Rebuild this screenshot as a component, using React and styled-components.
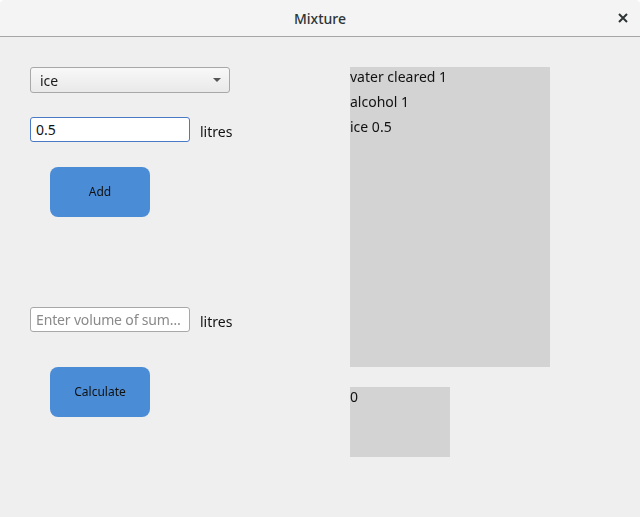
import * as React from "react";
import styled, { createGlobalStyle } from "styled-components";

const GlobalStyle = createGlobalStyle`
  html, body {
    margin: 0;
    padding: 0;
    background: #ffffff;
    font-family: "Noto Sans", "Open Sans", sans-serif;
  }
`;

const Window = styled.div`
  width: 640px;
  height: 517px;
  display: flex;
  flex-direction: column;
  background: #efefef;
  border-radius: 5px 5px 0 0;
  overflow: hidden;
`;

const TitleBar = styled.div`
  height: 36px;
  flex: none;
  display: flex;
  align-items: center;
  justify-content: center;
  position: relative;
  background: #f4f4f4;
  border-bottom: 1px solid #a6a6a6;
  color: #2e3436;
  font-size: 14px;
  font-weight: 500;
`;

const CloseButton = styled.button`
  position: absolute;
  right: 12px;
  top: 13px;
  width: 10px;
  height: 10px;
  padding: 0;
  border: none;
  background: none;
  display: flex;
`;

const Body = styled.div`
  flex: 1;
  display: flex;
  padding: 30px 0 0 30px;
`;

const LeftColumn = styled.div`
  width: 320px;
  display: flex;
  flex-direction: column;
`;

const RightColumn = styled.div`
  display: flex;
  flex-direction: column;
  gap: 20px;
`;

const SelectWrap = styled.div`
  position: relative;
  width: 200px;
  height: 26px;
`;

const Select = styled.select`
  appearance: none;
  width: 100%;
  height: 100%;
  box-sizing: border-box;
  padding: 0 24px 0 9px;
  border: 1px solid #a8a8a8;
  border-radius: 3px;
  background: linear-gradient(#f8f8f8, #e9e9e9);
  font-family: "Noto Sans", sans-serif;
  font-size: 14px;
  color: #1a1a1a;
  outline: none;
`;

const Arrow = styled.span`
  position: absolute;
  right: 9px;
  top: 11px;
  width: 0;
  height: 0;
  border-left: 4px solid transparent;
  border-right: 4px solid transparent;
  border-top: 4px solid #555;
  pointer-events: none;
`;

const FieldRow = styled.div`
  display: flex;
  align-items: center;
  gap: 10px;
  margin-top: ${(p) => p.$top}px;
`;

const Input = styled.input`
  width: 160px;
  height: 25px;
  box-sizing: border-box;
  padding: 0 4px 0 5px;
  border: 1px solid ${(p) => (p.$focused ? "#4a79c6" : "#a8a8a8")};
  border-radius: 3px;
  background: #ffffff;
  font-family: "Noto Sans", sans-serif;
  font-size: 14px;
  color: #111;
  caret-color: #000;
  outline: none;
  text-overflow: ellipsis;
  &::placeholder {
    color: #8a8a8a;
    letter-spacing: -0.15px;
  }
`;

const Unit = styled.span`
  font-size: 14px;
  color: #111;
  padding-top: 3px;
`;

const ActionButton = styled.button`
  width: 100px;
  height: 50px;
  margin: ${(p) => p.$top}px 0 0 20px;
  border: none;
  border-radius: 8px;
  background: #4a8cd6;
  color: #111;
  font-family: "Noto Sans", sans-serif;
  font-size: 12px;
  padding-bottom: 2px;
`;

const ListBox = styled.div`
  width: 200px;
  height: 300px;
  background: #d3d3d3;
  display: flex;
  flex-direction: column;
  gap: 5px;
`;

const ResultBox = styled.div`
  width: 100px;
  height: 70px;
  background: #d3d3d3;
`;

const Line = styled.div`
  font-size: 14px;
  line-height: 20px;
  color: #111;
`;

const items = ["vater cleared 1", "alcohol 1", "ice 0.5"];

export default function App() {
  const [amount, setAmount] = React.useState("0.5");
  const [volume, setVolume] = React.useState("");
  const ref = React.useRef(null);

  React.useEffect(() => {
    const el = ref.current;
    if (el) {
      el.focus();
      el.setSelectionRange(el.value.length, el.value.length);
    }
  }, []);

  return (
    <>
      <GlobalStyle />
      <Window>
        <TitleBar>
          Mixture
          <CloseButton aria-label="close">
            <svg width="10" height="10" viewBox="0 0 10 10">
              <path d="M1 1L9 9M9 1L1 9" stroke="#2e3436" strokeWidth="2" />
            </svg>
          </CloseButton>
        </TitleBar>
        <Body>
          <LeftColumn>
            <SelectWrap>
              <Select defaultValue="ice">
                <option>water cleared</option>
                <option>alcohol</option>
                <option>ice</option>
              </Select>
              <Arrow />
            </SelectWrap>
            <FieldRow $top={24}>
              <Input
                ref={ref}
                $focused
                value={amount}
                onChange={(e) => setAmount(e.target.value)}
              />
              <Unit>litres</Unit>
            </FieldRow>
            <ActionButton $top={25}>Add</ActionButton>
            <FieldRow $top={90}>
              <Input
                placeholder="Enter volume of summary"
                value={volume}
                onChange={(e) => setVolume(e.target.value)}
              />
              <Unit>litres</Unit>
            </FieldRow>
            <ActionButton $top={35}>Calculate</ActionButton>
          </LeftColumn>
          <RightColumn>
            <ListBox>
              {items.map((t) => (
                <Line key={t}>{t}</Line>
              ))}
            </ListBox>
            <ResultBox>
              <Line>0</Line>
            </ResultBox>
          </RightColumn>
        </Body>
      </Window>
    </>
  );
}
